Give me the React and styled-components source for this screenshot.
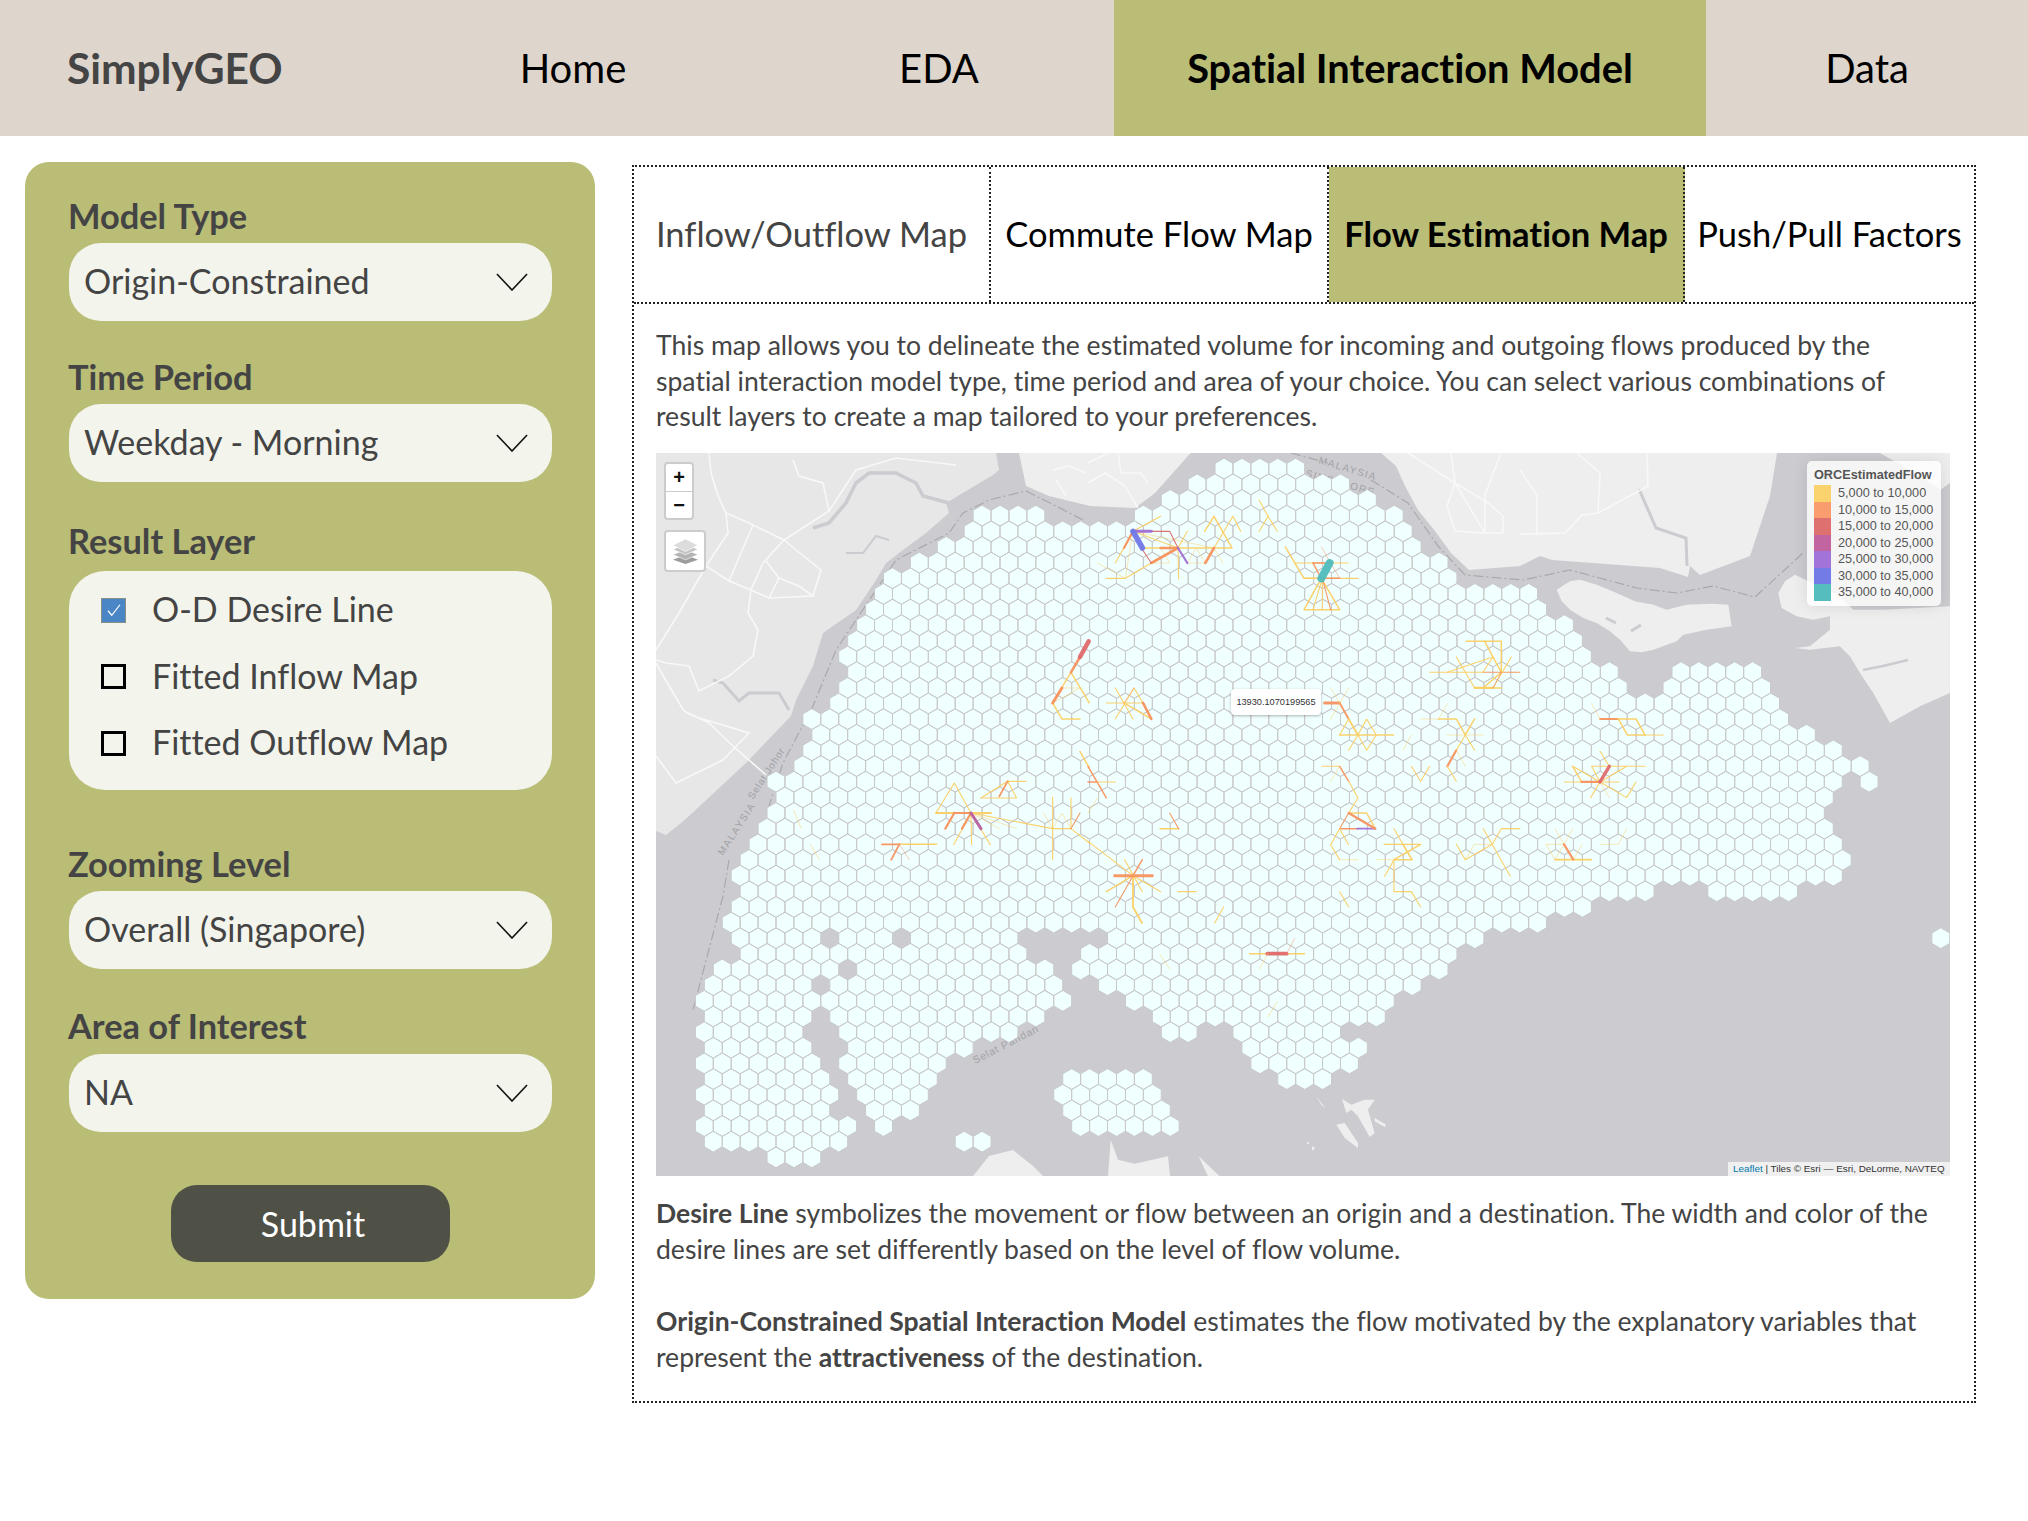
import styled, { createGlobalStyle } from "styled-components";

const FONT = `Lato, "Open Sans", sans-serif`;
const LEAFLET = `"Liberation Sans", Arial, sans-serif`;

const Y = "#fbcf63";
const O = "#f7935f";
const R = "#df6a6c";
const M = "#b75f9f";
const P = "#a06fd8";
const B = "#6f78e6";
const T = "#4fbcbc";

// hex rows, read off the reference: [start k, end k] per row
const HEX_ROWS = [
  [[0, 4]],
  [[-1.5, 6.5]],
  [[-3, 8]],
  [[-13.5, -10.5], [-4.5, 9.5]],
  [[-14, 10]],
  [[-15.5, 10.5]],
  [[-17, 12]],
  [[-18.5, 12.5]],
  [[-19, 17]],
  [[-19.5, 17.5]],
  [[-20, 19]],
  [[-20.5, 19.5]],
  [[-21, 20]],
  [[-20.5, 21.5], [25.5, 29.5]],
  [[-21, 22], [25, 30]],
  [[-21.5, 30.5]],
  [[-23, 31]],
  [[-22.5, 32.5]],
  [[-23, 34]],
  [[-23.5, 35.5]],
  [[-25, 34], [36, 36]],
  [[-24.5, 33.5]],
  [[-25, 33]],
  [[-25.5, 33.5]],
  [[-26, 34]],
  [[-26.5, 34.5]],
  [[-27, 34]],
  [[-26.5, 23.5], [27.5, 31.5]],
  [[-27, 20]],
  [[-27.5, 17.5]],
  [[-27, -23], [-21, -19], [-17, -12], [-6, 14], [40, 40]],
  [[-26.5, -22.5], [-21.5, -20.5], [-19.5, -11.5], [-7.5, 12.5]],
  [[-28, -22], [-20, -10], [-8, 12]],
  [[-28.5, -23.5], [-21.5, -9.5], [-6.5, 10.5]],
  [[-29, -9], [-5, 9]],
  [[-28.5, -23.5], [-21.5, -10.5], [-3.5, 8.5]],
  [[-29, -24], [-21, -12], [-3, -2], [1, 6]],
  [[-28.5, -23.5], [-20.5, -14.5], [1.5, 7.5]],
  [[-29, -23], [-21, -16], [2, 7]],
  [[-28.5, -22.5], [-20.5, -16.5], [-8.5, -4.5], [3.5, 5.5]],
  [[-29, -22], [-20, -17], [-9, -4]],
  [[-28.5, -22.5], [-19.5, -17.5], [-8.5, -3.5]],
  [[-29, -21], [-19, -19], [-8, -3]],
  [[-28.5, -21.5], [-14.5, -13.5]],
  [[-25, -23]],
];

const buildHexPath = () => {
  const r = 10.42;
  const w = 8.96;
  let d = "";
  HEX_ROWS.forEach((segments, row) => {
    const cy = 15.7 + row * 15.65;
    segments.forEach(([from, to]) => {
      for (let k = from; k <= to; k += 1) {
        const cx = 568 + k * 17.92;
        d += `M${cx} ${cy - r}L${cx + w} ${cy - r / 2}L${cx + w} ${cy + r / 2}L${cx} ${cy + r}L${cx - w} ${cy + r / 2}L${cx - w} ${cy - r / 2}Z`;
      }
    });
  });
  return d;
};

// polylines are in 3x crop coordinates, one group per crop of the map
const FLOWS = [
  {
    dx: 0,
    dy: 0,
    lines: [
      [Y, 4, "1245,658 1190,750 1218,798 1272,798"],
      [Y, 4, "1245,658 1300,750"],
      [Y, 2, "1190,750 1272,705 1218,705"],
      [O, 7, "1272,612 1245,658"],
      [O, 8, "1218,705 1190,750"],
      [R, 12, "1298,565 1272,612"],
      [Y, 4, "1272,895 1300,945"],
    ],
  },
  {
    dx: 432,
    dy: 0,
    lines: [
      [Y, 3, "55,376 112,376 190,330 270,285"],
      [Y, 2, "28,330 112,376 135,235"],
      [Y, 3, "82,330 135,235 218,190"],
      [Y, 3, "135,235 270,285"],
      [Y, 2, "135,235 378,285"],
      [Y, 4, "160,285 432,285 378,190 350,235"],
      [Y, 3, "378,285 435,190 458,235"],
      [Y, 3, "298,235 270,285 272,378"],
      [Y, 2, "218,285 245,330 190,330"],
      [Y, 2, "272,285 298,330 352,330 378,285 405,330"],
      [Y, 2, "298,330 325,285 352,330"],
      [O, 7, "218,285 270,285 190,330"],
      [O, 7, "378,285 352,330"],
      [O, 6, "135,235 108,285"],
      [R, 3, "135,235 245,235 270,285"],
      [R, 3, "160,285 190,330"],
      [P, 8, "135,235 190,235"],
      [P, 6, "270,285 298,330"],
      [B, 15, "135,235 163,285"],
      [Y, 3, "514,142 540,190 514,235"],
      [Y, 3, "540,190 568,235"],
      [Y, 4, "592,282 648,376 700,376"],
      [Y, 3, "620,330 780,330"],
      [Y, 3, "648,376 810,376"],
      [Y, 4, "700,376 648,470 755,470 700,376"],
      [Y, 3, "703,376 703,470"],
      [Y, 3, "675,470 703,376"],
      [O, 4, "675,330 728,330"],
      [O, 4, "675,330 700,376 755,376"],
      [O, 2, "700,282 755,376"],
      [O, 3, "703,376 728,470"],
      [T, 21, "725,330 700,376"],
      [Y, 4, "1135,565 1240,565 1240,658"],
      [Y, 4, "1190,565 1240,658 1185,705 1240,705"],
      [Y, 3, "1025,658 1185,658"],
      [O, 3, "1185,658 1295,658"],
      [Y, 3, "1105,612 1160,705 1215,705 1270,612"],
      [Y, 3, "1078,658 1215,612 1185,658"],
      [Y, 6, "1160,705 1215,705"],
      [R, 2, "1240,658 1215,705"],
      [Y, 3, "55,750 165,750"],
      [Y, 3, "82,705 135,798"],
      [Y, 3, "82,798 138,705 165,750"],
      [Y, 4, "108,750 190,798"],
      [O, 7, "165,750 190,798"],
      [O, 2, "108,750 138,705"],
      [O, 8, "710,750 755,750"],
      [O, 5, "755,750 782,798"],
      [Y, 5, "782,798 810,846"],
      [Y, 4, "755,846 917,846"],
      [Y, 3, "755,846 782,798"],
      [Y, 3, "810,846 836,798 865,846 836,892 810,846"],
      [Y, 2, "728,705 755,750"],
      [Y, 2, "782,705 728,798"],
      [Y, 3, "782,892 810,846"],
      [Y, 2, "998,798 1052,798"],
      [Y, 4, "1052,798 1105,798 1132,846 1160,798"],
      [Y, 2, "1052,798 1078,752"],
      [Y, 3, "1132,846 1160,892"],
      [Y, 2, "1078,846 1185,846"],
      [Y, 3, "1105,892 1132,846"],
      [O, 6, "1105,892 1078,940"],
      [Y, 3, "1078,940 1105,985"],
      [Y, 2, "1132,940 1105,892"],
      [Y, 2, "945,892 970,846"],
      [Y, 3, "970,940 998,985 1025,940"],
      [Y, 3, "702,940 755,940"],
      [O, 4, "755,940 782,985"],
      [Y, 2, "728,985 755,940"],
      [Y, 3, "782,985 810,1035 782,1080"],
      [O, 4, "0,940 55,1035"],
      [Y, 3, "27,987 82,987"],
      [O, 4, "0,987 27,987"],
      [Y, 2, "0,1080 28,1035"],
    ],
  },
  {
    dx: 864,
    dy: 0,
    lines: [
      [O, 5, "240,798 295,798"],
      [Y, 4, "295,798 348,798 375,846"],
      [Y, 3, "375,846 430,846"],
      [Y, 4, "295,798 322,846 375,846"],
      [Y, 2, "215,752 240,798"],
      [Y, 3, "133,987 297,987"],
      [Y, 4, "158,940 185,987"],
      [Y, 3, "158,940 240,987"],
      [Y, 3, "215,940 375,940"],
      [Y, 3, "215,940 240,987"],
      [Y, 3, "240,987 320,940"],
      [Y, 3, "240,895 268,940"],
      [Y, 3, "240,987 320,1034 348,987"],
      [Y, 3, "240,987 212,1034"],
      [Y, 2, "240,987 268,1034"],
      [O, 6, "185,987 240,987"],
      [R, 9, "268,940 240,987"],
    ],
  },
  {
    dx: 0,
    dy: 360,
    lines: [
      [Y, 5, "840,0 1005,0"],
      [Y, 3, "840,0 895,-90 945,0"],
      [Y, 3, "975,-45 1055,-95 1110,-95"],
      [Y, 3, "975,-45 1082,-45 1055,-95"],
      [O, 5, "1030,-50 1055,-95"],
      [Y, 3, "945,0 893,95"],
      [Y, 3, "945,0 947,95"],
      [Y, 3, "945,0 1003,95"],
      [Y, 2, "945,0 1030,47"],
      [Y, 2, "945,0 1082,47"],
      [Y, 3, "945,0 1190,47 1245,47 1300,90"],
      [Y, 3, "1190,-47 1190,140"],
      [Y, 3, "1245,-45 1245,47"],
      [Y, 2, "1163,0 1190,47 1218,0 1245,47"],
      [O, 3, "1245,47 1272,0"],
      [O, 5, "895,0 945,0"],
      [O, 6, "895,0 868,47"],
      [O, 6, "945,0 918,47"],
      [M, 8, "945,0 975,47"],
      [Y, 4, "730,94 842,94"],
      [O, 5, "678,94 730,94"],
      [O, 5, "730,94 706,140"],
      [O, 2, "730,94 760,140"],
      [Y, 2, "463,94 490,140"],
      [Y, 2, "412,-10 435,45"],
    ],
  },
  {
    dx: 432,
    dy: 360,
    lines: [
      [Y, 4, "782,0 836,0 862,47"],
      [O, 3, "755,47 782,0"],
      [O, 4, "755,47 808,47"],
      [P, 5, "808,47 862,47"],
      [O, 6, "782,0 862,47"],
      [Y, 3, "755,47 782,95"],
      [Y, 3, "755,47 728,95 755,140"],
      [Y, 2, "755,140 810,140"],
      [Y, 3, "888,94 998,94"],
      [Y, 4, "945,94 972,140 918,140 998,94"],
      [Y, 3, "918,47 972,140"],
      [Y, 2, "864,140 918,140"],
      [Y, 3, "918,140 890,190"],
      [Y, 3, "918,140 918,236 970,236 998,282"],
      [Y, 3, "1105,94 1132,140 1213,94 1240,47 1296,47"],
      [Y, 2, "1132,140 1159,94 1213,94"],
      [Y, 3, "1186,47 1267,190"],
      [Y, 3, "0,85 135,188"],
      [Y, 4, "55,236 135,188"],
      [Y, 3, "135,188 218,236"],
      [O, 3, "135,188 82,282"],
      [Y, 5, "135,188 135,282 162,330"],
      [Y, 3, "110,140 163,236"],
      [O, 4, "135,188 163,140"],
      [O, 8, "80,188 193,188"],
      [Y, 4, "216,47 272,47"],
      [O, 3, "245,0 272,47"],
      [Y, 3, "270,236 325,236"],
      [Y, 3, "380,330 407,282"],
      [Y, 3, "755,236 782,282"],
      [Y, 2, "216,424 245,468"],
      [Y, 4, "485,422 650,422"],
      [R, 10, "538,422 596,422"],
      [O, 2, "596,422 620,376"],
      [Y, 2, "514,468 540,422"],
      [Y, 2, "540,612 568,566"],
    ],
  },
  {
    dx: 864,
    dy: 360,
    lines: [
      [Y, 5, "105,140 213,140"],
      [Y, 2, "105,140 132,94"],
      [Y, 2, "78,94 132,94"],
      [Y, 2, "78,94 105,140"],
      [Y, 2, "105,47 132,94"],
      [Y, 2, "132,94 158,47"],
      [Y, 2, "160,140 186,94"],
      [Y, 2, "240,94 295,94 320,47"],
      [O, 6, "132,94 160,140"],
    ],
  },
];

const LEGEND = [
  ["#fad36f", "5,000 to 10,000"],
  ["#f99c6e", "10,000 to 15,000"],
  ["#df7070", "15,000 to 20,000"],
  ["#c264a0", "20,000 to 25,000"],
  ["#a273d8", "25,000 to 30,000"],
  ["#727be6", "30,000 to 35,000"],
  ["#55bdbd", "35,000 to 40,000"],
];

const Chevron = () => (
  <ChevronIcon viewBox="0 0 34 19">
    <polyline points="1,1 17,18 33,1" fill="none" stroke="#111" strokeWidth="1.7" />
  </ChevronIcon>
);

const Select = ({ value }) => (
  <SelectBox>
    <SelectValue>{value}</SelectValue>
    <Chevron />
  </SelectBox>
);

const MapLayers = () => (
  <MapSvg viewBox="0 0 1294 723">
    <rect width="1294" height="723" fill="#cccbd0" />
    {/* land */}
    <g fill="#eeeeee">
      <path d="M0 0L340 0L343 17L337 22L290 50L293 60L270 80L247 97L230 110L220 127L200 157L167 180L157 213L140 247L135 263L90 310L33 363L25 370L10 382L0 378Z" fill="#e7e7e7" />
      <path d="M363 0L370 33L393 43L434 53L479 55L499 40L532 3L535 0Z" />
      <path d="M725 0L740 13L749 33L762 57L779 78L795 100L813 117L864 113L884 103L896 107L964 112L1004 115L1032 124L1034 113L1044 122L1094 103L1114 43L1121 0Z" />
      <g transform="translate(864 0) scale(0.3333)">
        <path d="M110 410L150 385L180 380L230 395L290 420L345 445L400 455L440 470L500 455L575 452L625 455L635 520L560 530L490 545L470 565L400 590L365 598L330 595L300 560L270 535L230 510L190 495L150 470L125 445Z" />
        <path d="M825 365L795 385L775 420L785 465L830 490L880 500L930 490L930 530L870 580L825 585L870 590L960 580L990 610L1020 660L1060 720L1110 810L1200 760L1290 720L1290 460L1090 470L1000 470L960 430Z" />
        <path d="M1080 0L1290 0L1290 90L1262 110L1150 40Z" />
      </g>
      <path d="M317 723L333 703L357 697L377 713L387 723Z" />
      <g transform="translate(432 360) scale(0.3333)">
        <path d="M60 1090L68 980L90 1040L140 1052L240 1030L246 1090Z" />
        <path d="M332 1030L395 1090L360 1090Z" />
        <path d="M685 850L712 885L700 875Z" />
        <path d="M762 858L790 875L830 860L860 860L840 890L860 960L845 972L810 910L790 890L775 900Z" />
        <path d="M745 935L770 930L810 990L810 1005L770 975Z" />
        <path d="M860 915L895 935L890 942L860 925Z" />
        <path d="M655 985L665 990L660 995Z M672 1000L682 1005L672 1014Z" />
      </g>
    </g>
    {/* rivers and creeks */}
    <g fill="none" stroke="#cccbd0">
      <path d="M293 50L267 43L260 30L240 20L213 20L200 30L190 50L173 70L157 75" strokeWidth="3.5" />
      <path d="M233 87L220 83L207 100L190 100" strokeWidth="2" />
      <path d="M133 257L123 240L93 240L83 248L67 230L57 227" strokeWidth="3" />
      <path d="M983 36L1000 75L1030 85L1031 113" strokeWidth="3" />
      <path d="M1207 217L1227 213L1252 207" strokeWidth="2.5" />
      <path d="M950 165L960 170M975 178L985 172M950 180L958 190" strokeWidth="3" />
    </g>
    {/* roads */}
    <g fill="none" stroke="#f8f8f8" strokeWidth="1.6">
      <path d="M53 0L55 20L62 43L70 60L93 70L128 87L173 58L200 17L240 5L300 12" />
      <path d="M70 60L72 80L50 113L23 160L0 197" />
      <path d="M128 87L107 110L95 137L92 160L102 177L97 203L73 223L43 238L33 213L10 210L0 207" />
      <path d="M50 113L73 128L95 137L113 145L157 143L165 117L140 97L128 87" />
      <path d="M110 108L123 125L143 133L157 143M123 125L113 145M97 72L73 128" />
      <path d="M0 210L13 233L28 258L53 270L77 293L110 322M28 258L37 263L93 280L67 307L20 330L0 303" />
      <path d="M137 7L143 23L167 30L173 58" />
      <path d="M432 10L452 0M432 30L449 20L469 33L482 55M462 0L465 20L485 20L492 30" />
      <path d="M397 17L413 13L430 20M410 43L400 27" />
      <path d="M795 0L799 30L829 80L847 80M799 30L791 53L799 78L829 80M829 80L829 42L845 0M799 30L832 50L847 63L847 80M752 0L799 30" />
      <path d="M864 17L881 42L881 81L909 80L926 62L942 60L944 20L921 0M991 0L992 33L942 60M864 81L909 80" />
    </g>
    {/* border */}
    <g fill="none" stroke="#a9a9ab" strokeWidth="1.2" strokeDasharray="10 3 2 3">
      <path d="M427 67L400 53L370 38L333 47L307 60L293 80L240 107L200 167L180 197L157 253L127 310L113 353" />
      <path d="M635 0L672 10M715 27L752 50L782 93L809 122L867 127L914 117L981 135L1021 140L1057 133L1099 144L1147 100" />
      <path d="M73 407L67 443L37 557" />
    </g>
    <MapLabel transform="translate(67 403) rotate(-57)" fontSize="10" letterSpacing="1.4">MALAYSIA</MapLabel>
    <MapLabel transform="translate(97 347) rotate(-57)" fontSize="10" letterSpacing="0.8">Selat Johor</MapLabel>
    <MapLabel transform="translate(662 10) rotate(17)" fontSize="10" letterSpacing="1.4">MALAYSIA</MapLabel>
    <MapLabel transform="translate(649 23) rotate(16)" fontSize="10" letterSpacing="1.4">SINGAPORE</MapLabel>
    <MapLabel transform="translate(319 611) rotate(-27)" fontSize="10.5" letterSpacing="0.8">Selat Pandan</MapLabel>
    <HexCells d={buildHexPath()} />
    {FLOWS.map((tile, i) => (
      <g key={i} transform={`translate(${tile.dx} ${tile.dy}) scale(0.3333)`} fill="none" strokeLinecap="round" strokeLinejoin="round">
        {tile.lines.map(([color, width, points], j) => (
          <polyline key={j} points={points} stroke={color} strokeWidth={width * 1.12} opacity={width > 2 ? 0.95 : 0.65} />
        ))}
      </g>
    ))}
  </MapSvg>
);

const App = () => {
  return (
    <Page>
      <GlobalStyle />
      <Header>
        <Logo>SimplyGEO</Logo>
        <NavItem>Home</NavItem>
        <NavItem $shift>EDA</NavItem>
        <NavItem $active>Spatial Interaction Model</NavItem>
        <NavItem>Data</NavItem>
      </Header>
      <Body>
        <Sidebar>
          <FieldLabel>Model Type</FieldLabel>
          <Select value="Origin-Constrained" />
          <FieldLabel $top={37}>Time Period</FieldLabel>
          <Select value="Weekday - Morning" />
          <FieldLabel $top={40} $bottom={12}>Result Layer</FieldLabel>
          <CheckGroup>
            <CheckRow>
              <CheckBox $checked>
                <svg viewBox="0 0 24 24" width="18" height="18">
                  <polyline points="4,13 9,19 20,5" fill="none" stroke="#fff" strokeWidth="1.6" />
                </svg>
              </CheckBox>
              <CheckText>O-D Desire Line</CheckText>
            </CheckRow>
            <CheckRow>
              <CheckBox />
              <CheckText>Fitted Inflow Map</CheckText>
            </CheckRow>
            <CheckRow>
              <CheckBox />
              <CheckText>Fitted Outflow Map</CheckText>
            </CheckRow>
          </CheckGroup>
          <FieldLabel $top={55}>Zooming Level</FieldLabel>
          <Select value="Overall (Singapore)" />
          <FieldLabel $top={38} $bottom={10}>Area of Interest</FieldLabel>
          <Select value="NA" />
          <SubmitButton>Submit</SubmitButton>
        </Sidebar>
        <Main>
          <Tabs>
            <Tab $muted>Inflow/Outflow Map</Tab>
            <Tab>Commute Flow Map</Tab>
            <Tab $active>Flow Estimation Map</Tab>
            <Tab $last>Push/Pull Factors</Tab>
          </Tabs>
          <Content>
            <Paragraph>
              This map allows you to delineate the estimated volume for incoming and outgoing flows produced by the
              <br />
              spatial interaction model type, time period and area of your choice. You can select various combinations of
              <br />
              result layers to create a map tailored to your preferences.
            </Paragraph>
            <MapFrame>
              <MapLayers />
              <ZoomControl>
                <ZoomButton>+</ZoomButton>
                <ZoomButton $minus>−</ZoomButton>
              </ZoomControl>
              <LayerControl>
                <svg viewBox="0 0 24 24" width="25" height="25">
                  <polygon points="12,15 24,20 12,24 0,20" fill="#9c9c9c" />
                  <polygon points="12,10 24,15 12,20 0,15" fill="#b4b4b4" stroke="#fff" strokeWidth="0.6" />
                  <polygon points="12,5 24,10 12,15 0,10" fill="#c4c4c4" stroke="#fff" strokeWidth="0.6" />
                  <polygon points="12,0 24,6 12,12 0,6" fill="#dcdcdc" stroke="#fff" strokeWidth="0.6" />
                </svg>
              </LayerControl>
              <Legend>
                <LegendTitle>ORCEstimatedFlow</LegendTitle>
                {LEGEND.map(([color, label]) => (
                  <LegendRow key={label}>
                    <LegendSwatch $color={color} />
                    {label}
                  </LegendRow>
                ))}
              </Legend>
              <Popup>13930.1070199565</Popup>
              <Attribution>
                <LeafletLink>Leaflet</LeafletLink> | Tiles © Esri — Esri, DeLorme, NAVTEQ
              </Attribution>
            </MapFrame>
            <Paragraph $top={20}>
              <strong>Desire Line</strong> symbolizes the movement or flow between an origin and a destination. The width and color of the
              <br />
              desire lines are set differently based on the level of flow volume.
            </Paragraph>
            <Paragraph $top={36.5}>
              <strong>Origin-Constrained Spatial Interaction Model</strong> estimates the flow motivated by the explanatory variables that
              <br />
              represent the <strong>attractiveness</strong> of the destination.
            </Paragraph>
          </Content>
        </Main>
      </Body>
    </Page>
  );
};

const GlobalStyle = createGlobalStyle`
  html, body { margin: 0; padding: 0; background: #fff; }
  body { font-family: ${FONT}; font-variant-ligatures: none; }
`;
const Page = styled.div`
  width: 2028px;
  height: 1521px;
  overflow: hidden;
`;
const Header = styled.header`
  display: grid;
  grid-template-columns: 392px 362px 360px 592px 322px;
  height: 136px;
  background: #ded5cc;
`;
const Logo = styled.div`
  padding-left: 67px;
  font-size: 42.5px;
  font-weight: 700;
  color: #444;
  line-height: 136px;
`;
const NavItem = styled.div`
  display: flex;
  align-items: center;
  justify-content: center;
  padding-bottom: ${(p) => (p.$active ? "2px" : 0)};
  font-size: ${(p) => (p.$active ? "39.8px" : "40px")};
  color: #000;
  font-weight: ${(p) => (p.$active ? 700 : 400)};
  background: ${(p) => (p.$active ? "#b9bd76" : "transparent")};
  padding-left: ${(p) => (p.$shift ? "10px" : 0)};
`;
const Body = styled.div`
  display: flex;
  align-items: flex-start;
  gap: 37px;
  padding: 26px 0 0 25px;
`;
const Sidebar = styled.aside`
  box-sizing: border-box;
  width: 570px;
  height: 1137px;
  padding: 35px 43px 0 44px;
  background: #b9bd76;
  border-radius: 24px;
`;
const FieldLabel = styled.div`
  margin: ${(p) => p.$top || 0}px 0 ${(p) => p.$bottom || 9}px -1px;
  font-size: 34.4px;
  font-weight: 700;
  line-height: 37px;
  color: #444;
`;
const SelectBox = styled.div`
  box-sizing: border-box;
  display: flex;
  align-items: center;
  justify-content: space-between;
  height: 78px;
  padding: 0 24px 0 15px;
  background: #f3f4ec;
  border-radius: 32px;
  font-size: 34px;
  color: #444;
`;
const SelectValue = styled.span`
  padding-bottom: 3px;
`;
const ChevronIcon = styled.svg`
  display: block;
  width: 32px;
  height: 18px;
`;
const CheckGroup = styled.div`
  box-sizing: border-box;
  height: 219px;
  padding: 6px 0 0 32px;
  background: #f3f4ec;
  border-radius: 36px;
`;
const CheckRow = styled.div`
  display: flex;
  align-items: center;
  gap: 26px;
  height: 66.5px;
  font-size: 34px;
  color: #444;
`;
const CheckText = styled.span`
  padding-bottom: 3px;
`;
const CheckBox = styled.span`
  box-sizing: border-box;
  display: flex;
  align-items: center;
  justify-content: center;
  width: 25px;
  height: 25px;
  border: ${(p) => (p.$checked ? "1px solid #8a8f86" : "3px solid #000")};
  background: ${(p) => (p.$checked ? "#4a86c5" : "transparent")};
`;
const SubmitButton = styled.button`
  display: block;
  width: 279px;
  height: 77px;
  margin: 53px auto 0;
  padding: 0 0 0 5px;
  border: 0;
  border-radius: 26px;
  background: #505146;
  color: #fff;
  font-family: ${FONT};
  font-size: 34px;
`;
const Main = styled.main`
  box-sizing: border-box;
  width: 1344px;
  height: 1238px;
  margin-top: 3px;
  border: 2px dotted #222;
`;
const Tabs = styled.div`
  display: grid;
  grid-template-columns: 357px 338px 356px 289px;
  height: 135px;
  border-bottom: 2px dotted #222;
`;
const Tab = styled.div`
  box-sizing: border-box;
  display: flex;
  align-items: center;
  justify-content: center;
  padding-bottom: 3px;
  border-right: ${(p) => (p.$last ? "none" : "2px dotted #222")};
  background: ${(p) => (p.$active ? "#b9bd76" : "transparent")};
  color: ${(p) => (p.$muted ? "#444" : "#000")};
  font-size: 34.5px;
  font-weight: ${(p) => (p.$active ? 700 : 400)};
  white-space: nowrap;
`;
const Content = styled.div`
  padding: 24px 0 0 22px;
`;
const Paragraph = styled.p`
  margin: ${(p) => p.$top || 0}px 0 0;
  font-size: 26.55px;
  line-height: 35.7px;
  color: #444;
  white-space: nowrap;
  strong {
    font-weight: 700;
  }
`;
const MapFrame = styled.div`
  position: relative;
  width: 1294px;
  height: 723px;
  margin-top: 18px;
  font-family: ${LEAFLET};
`;
const MapSvg = styled.svg`
  display: block;
  width: 1294px;
  height: 723px;
`;
const HexCells = styled.path`
  fill: #f0ffff;
  stroke: #c9c9c9;
  stroke-width: 1;
`;
const MapLabel = styled.text`
  fill: #a2a2a5;
  font-family: ${LEAFLET};
`;
const ZoomControl = styled.div`
  position: absolute;
  left: 8px;
  top: 9px;
  box-sizing: border-box;
  width: 30px;
  height: 58px;
  border: 2px solid rgba(0, 0, 0, 0.2);
  border-radius: 4px;
  background: #fff;
`;
const ZoomButton = styled.div`
  display: flex;
  align-items: center;
  justify-content: center;
  height: 27px;
  border-bottom: ${(p) => (p.$minus ? "none" : "1px solid #ccc")};
  font-size: 20px;
  font-weight: 700;
  color: #111;
`;
const LayerControl = styled.div`
  position: absolute;
  left: 8px;
  top: 77px;
  box-sizing: border-box;
  display: flex;
  align-items: center;
  justify-content: center;
  width: 42px;
  height: 42px;
  border: 2px solid rgba(0, 0, 0, 0.2);
  border-radius: 4px;
  background: #fff;
`;
const Legend = styled.div`
  position: absolute;
  right: 9px;
  top: 8px;
  box-sizing: border-box;
  width: 134px;
  height: 145px;
  padding: 7px 0 0 7px;
  background: rgba(255, 255, 255, 0.8);
  border-radius: 5px;
  box-shadow: 0 0 15px rgba(0, 0, 0, 0.1);
  color: #555;
  font-size: 12.7px;
`;
const LegendTitle = styled.div`
  height: 17px;
  font-weight: 700;
  line-height: 14px;
  white-space: nowrap;
`;
const LegendRow = styled.div`
  display: flex;
  align-items: center;
  gap: 7px;
  height: 16.5px;
  white-space: nowrap;
`;
const LegendSwatch = styled.span`
  width: 17px;
  height: 16.5px;
  background: ${(p) => p.$color};
`;
const Popup = styled.div`
  position: absolute;
  left: 575px;
  top: 236px;
  box-sizing: border-box;
  display: flex;
  align-items: center;
  justify-content: center;
  width: 90px;
  height: 26px;
  background: #fff;
  border-radius: 4px;
  box-shadow: 0 1px 3px rgba(0, 0, 0, 0.3);
  color: #333;
  font-size: 9.2px;
`;
const Attribution = styled.div`
  position: absolute;
  right: 0;
  bottom: 0;
  box-sizing: border-box;
  width: 222px;
  height: 14px;
  padding-left: 5px;
  background: rgba(255, 255, 255, 0.7);
  color: #333;
  font-size: 9.9px;
  line-height: 14px;
  white-space: nowrap;
`;
const LeafletLink = styled.span`
  color: #0078a8;
`;

export default App;
